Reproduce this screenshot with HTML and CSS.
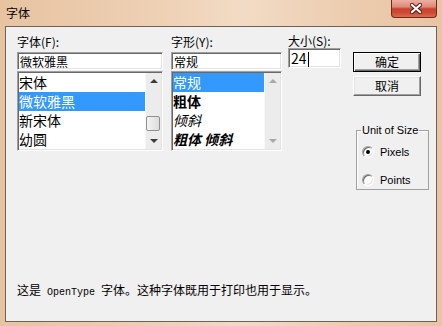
FILE: index.html
```html
<!DOCTYPE html>
<html lang="zh-CN">

<head>
   <meta charset="UTF-8">
   <title>字体</title>
   <link rel="stylesheet" href="styles.css">
</head>

<body>
   <div class="window">
      <div class="titlebar">
         <span class="title">字体</span>
         <div class="close">
            <svg width="12" height="11" viewBox="0 0 12 11">
               <path d="M2 2 L10 9 M10 2 L2 9" stroke="#4a1a12" stroke-width="4.2" stroke-linecap="square" />
               <path d="M2 2 L10 9 M10 2 L2 9" stroke="#ffffff" stroke-width="2.2" stroke-linecap="square" />
            </svg>
         </div>
      </div>

      <div class="client">
         <div class="top">
            <!-- font face -->
            <div class="col col-face">
               <div class="lbl">字体(F):</div>
               <div class="field">微软雅黑</div>
               <div class="listbox">
                  <ul class="items">
                     <li>宋体</li>
                     <li class="sel">微软雅黑</li>
                     <li>新宋体</li>
                     <li>幼圆</li>
                  </ul>
                  <div class="sbar">
                     <div class="sbtn up"></div>
                     <div class="track"><div class="thumb"></div></div>
                     <div class="sbtn down"></div>
                  </div>
               </div>
            </div>

            <!-- font style -->
            <div class="col col-style">
               <div class="lbl">字形(Y):</div>
               <div class="field">常规</div>
               <div class="listbox">
                  <ul class="items">
                     <li class="sel">常规</li>
                     <li class="b">粗体</li>
                     <li class="i">倾斜</li>
                     <li class="b i">粗体 倾斜</li>
                  </ul>
                  <div class="sbar dis">
                     <div class="sbtn up"></div>
                     <div class="track"></div>
                     <div class="sbtn down"></div>
                  </div>
               </div>
            </div>

            <!-- size -->
            <div class="col col-size">
               <div class="lbl">大小(S):</div>
               <div class="field">24<span class="caret"></span></div>
            </div>

            <div class="col col-btns">
               <div class="btn def">确定</div>
               <div class="btn">取消</div>

               <fieldset class="group">
                  <legend>Unit of Size</legend>
                  <div class="opt"><span class="radio on"></span>Pixels</div>
                  <div class="opt"><span class="radio"></span>Points</div>
               </fieldset>
            </div>
         </div>

         <div class="desc">这是<span class="mono"> OpenType </span>字体。这种字体既用于打印也用于显示。</div>
      </div>
   </div>
</body>

</html>
```

FILE: styles.css
```css
* {
   box-sizing: border-box;
}

body {
   margin: 0;
   width: 442px;
   height: 326px;
   overflow: hidden;
   font-family: "Noto Sans CJK SC", "Liberation Sans", sans-serif;
   font-size: 12px;
   color: #000;
   background: linear-gradient(90deg, #e7c3a1 0%, #eed0b4 35%, #f2dbc5 55%, #ecccae 80%, #e8c5a4 100%);
}

.window {
   display: flex;
   flex-direction: column;
   height: 326px;
}

.titlebar {
   height: 26px;
   display: flex;
   align-items: flex-start;
}

.title {
   padding: 5px 0 0 6px;
   line-height: 16px;
}

.close {
   margin-left: auto;
   margin-right: 5px;
   width: 46px;
   height: 18px;
   display: flex;
   align-items: center;
   justify-content: center;
   padding-left: 4px;
   border: 1px solid #6f2a20;
   border-top: none;
   border-radius: 0 0 4px 4px;
   background: linear-gradient(#eab0a2 0%, #e08a78 40%, #c9432c 52%, #cd4a32 75%, #dc6a52 100%);
}

.client {
   flex: 1;
   margin: 0 5px 4px;
   border: 1px solid #6e6258;
   background: #f0f0f0;
   display: flex;
   flex-direction: column;
   padding: 8px 0 21px 11px;
}

.top {
   display: flex;
   align-items: flex-start;
}

.col-face {
   width: 146px;
}

.col-style {
   width: 111px;
   margin-left: 8px;
}

.col-size {
   width: 53px;
   margin-left: 6px;
}

.col-btns {
   width: 76px;
   margin-left: 12px;
   padding-top: 17px;
}

.lbl {
   line-height: 14px;
   height: 14px;
   margin-bottom: 3px;
   white-space: nowrap;
}

.col-size .lbl {
   line-height: 12px;
   height: 12px;
   margin-bottom: 1px;
}

.field,
.listbox {
   background: #fff;
   border: 1px solid;
   border-color: #a0a0a0 #fff #fff #a0a0a0;
   box-shadow: inset 1px 1px 0 #696969, inset -1px -1px 0 #e3e3e3;
}

.field {
   height: 18px;
   padding: 1px 2px;
   line-height: 15px;
   white-space: nowrap;
}

.col-size .field {
   height: 20px;
   font-size: 14px;
   line-height: 16px;
   padding: 1px 2px;
}

.caret {
   display: inline-block;
   width: 1px;
   height: 15px;
   background: #000;
   vertical-align: -3px;
   margin-left: 1px;
}

.listbox {
   margin-top: 1px;
   height: 80px;
   padding: 1px;
   display: flex;
}

.items {
   flex: 1;
   list-style: none;
   margin: 0;
   padding: 0;
   font-size: 14px;
}

.items li {
   height: 19px;
   line-height: 19px;
   white-space: nowrap;
}

.items li.sel {
   background: #3399ff;
   color: #fff;
}

.items li.b {
   font-weight: bold;
}

.items li.i {
   font-style: italic;
}

.sbar {
   width: 16px;
   display: flex;
   flex-direction: column;
   background: #ececec;
   border-left: 1px solid #f8f8f8;
}

.sbtn {
   height: 16px;
   display: flex;
   align-items: center;
   justify-content: center;
}

.sbtn::before {
   content: "";
   border-left: 4px solid transparent;
   border-right: 4px solid transparent;
}

.up::before {
   border-bottom: 4px solid #3c3c3c;
}

.down::before {
   border-top: 4px solid #3c3c3c;
}

.dis .up::before {
   border-bottom-color: #a8a8a8;
}

.dis .down::before {
   border-top-color: #a8a8a8;
}

.track {
   flex: 1;
}

.thumb {
   margin: 27px 1px 0 0;
   height: 15px;
   border: 1px solid #8e8f8f;
   border-radius: 2px;
   background: linear-gradient(90deg, #f4f4f4, #dcdcdc);
}

.btn {
   width: 68px;
   height: 20px;
   text-align: center;
   line-height: 18px;
   background: #f0f0f0;
   border: 1px solid;
   border-color: #fff #696969 #696969 #fff;
   box-shadow: inset -1px -1px 0 #a0a0a0, inset 1px 1px 0 #e3e3e3;
}

.btn.def {
   border: 1px solid #000;
   box-shadow: inset 1px 1px 0 #fff, inset -1px -1px 0 #696969, inset -2px -2px 0 #a0a0a0;
}

.btn + .btn {
   margin-top: 4px;
}

.group {
   margin: 28px 0 0 3px;
   width: 73px;
   height: 66px;
   padding: 0 0 0 4px;
   border: 1px solid #a0a0a0;
   box-shadow: inset 1px 1px 0 #fff;
   font-family: "Liberation Sans", sans-serif;
   font-size: 11px;
}

.group legend {
   padding: 0 1px;
   line-height: 13px;
}

.opt {
   display: flex;
   align-items: center;
   height: 14px;
   margin: 14px 0 0 1px;
}

.opt:first-of-type {
   margin-top: 8px;
}

.radio {
   width: 12px;
   height: 12px;
   margin-right: 6px;
   border-radius: 50%;
   border: 1px solid;
   border-color: #a0a0a0 #fff #fff #a0a0a0;
   box-shadow: inset 1px 1px 0 #696969, inset -1px -1px 0 #e3e3e3;
   background: #fff;
   display: flex;
   align-items: center;
   justify-content: center;
}

.radio.on::after {
   content: "";
   width: 4px;
   height: 4px;
   border-radius: 50%;
   background: #000;
}

.desc {
   margin-top: auto;
   line-height: 14px;
   white-space: nowrap;
}

.mono {
   font-family: "Liberation Mono", monospace;
   font-size: 10px;
}
```
